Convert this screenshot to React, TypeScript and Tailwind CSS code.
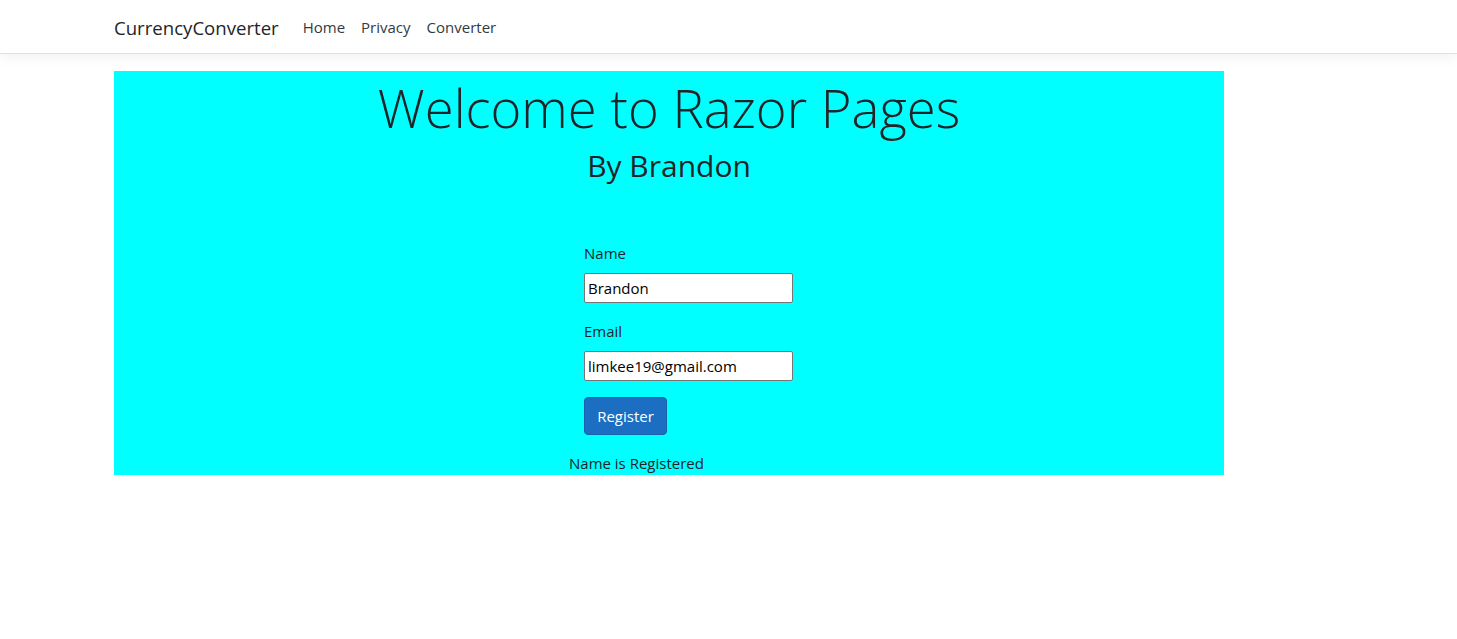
import React, { useState } from "react";

export default function App() {
    const [name, setName] = useState("Brandon");
    const [email, setEmail] = useState("limkee19@gmail.com");

    return (
        <div className="min-h-[639px] bg-white text-[#212529]" style={{ fontFamily: '"Segoe UI", "Open Sans", "Noto Sans", sans-serif' }}>
            {/* Navbar */}
            <nav className="h-[54px] border-b border-[#dee2e6] bg-white shadow-[0_4px_12px_rgba(0,0,0,0.05)]">
                <div className="ml-[114px] flex h-[53px] items-center pt-[2px]">
                    <a className="mr-[24px] text-[18.6px] text-[#212529]">CurrencyConverter</a>
                    <ul className="flex items-center gap-[16px] text-[15px] text-[#343a40]">
                        <li>Home</li>
                        <li>Privacy</li>
                        <li>Converter</li>
                    </ul>
                </div>
            </nav>

            {/* Main */}
            <main className="ml-[114px] mt-[17px] w-[1110px] bg-[#00ffff]">
                <div className="text-center">
                    <h1 className="pt-[3px] text-[52.6px] font-light leading-[67px]">Welcome to Razor Pages</h1>
                    <h2 className="mt-[6px] text-[30px] leading-[38px]">By Brandon</h2>
                </div>

                <form className="mt-[56px] flex flex-col pl-[470px] text-[15px]" onSubmit={(e) => e.preventDefault()}>
                    <label className="mb-[8px] leading-[24px]">Name</label>
                    <input
                        value={name}
                        onChange={(e) => setName(e.target.value)}
                        className="mb-[16px] h-[30px] w-[209px] rounded-[2px] border border-[#767676] bg-white px-[3px] text-[15px] text-black outline-none"
                    />
                    <label className="mb-[8px] leading-[24px]">Email</label>
                    <input
                        value={email}
                        onChange={(e) => setEmail(e.target.value)}
                        className="mb-[16px] h-[30px] w-[209px] rounded-[2px] border border-[#767676] bg-white px-[3px] text-[15px] text-black outline-none"
                    />
                    <button
                        type="submit"
                        className="h-[38px] w-[83px] rounded-[4px] border border-[#1861ac] bg-[#1b6ec2] text-[15px] text-white"
                    >
                        Register
                    </button>
                </form>

                <p className="ml-[455px] mt-[16px] text-[15px] leading-[24px]">Name is Registered</p>
            </main>
        </div>
    );
}
